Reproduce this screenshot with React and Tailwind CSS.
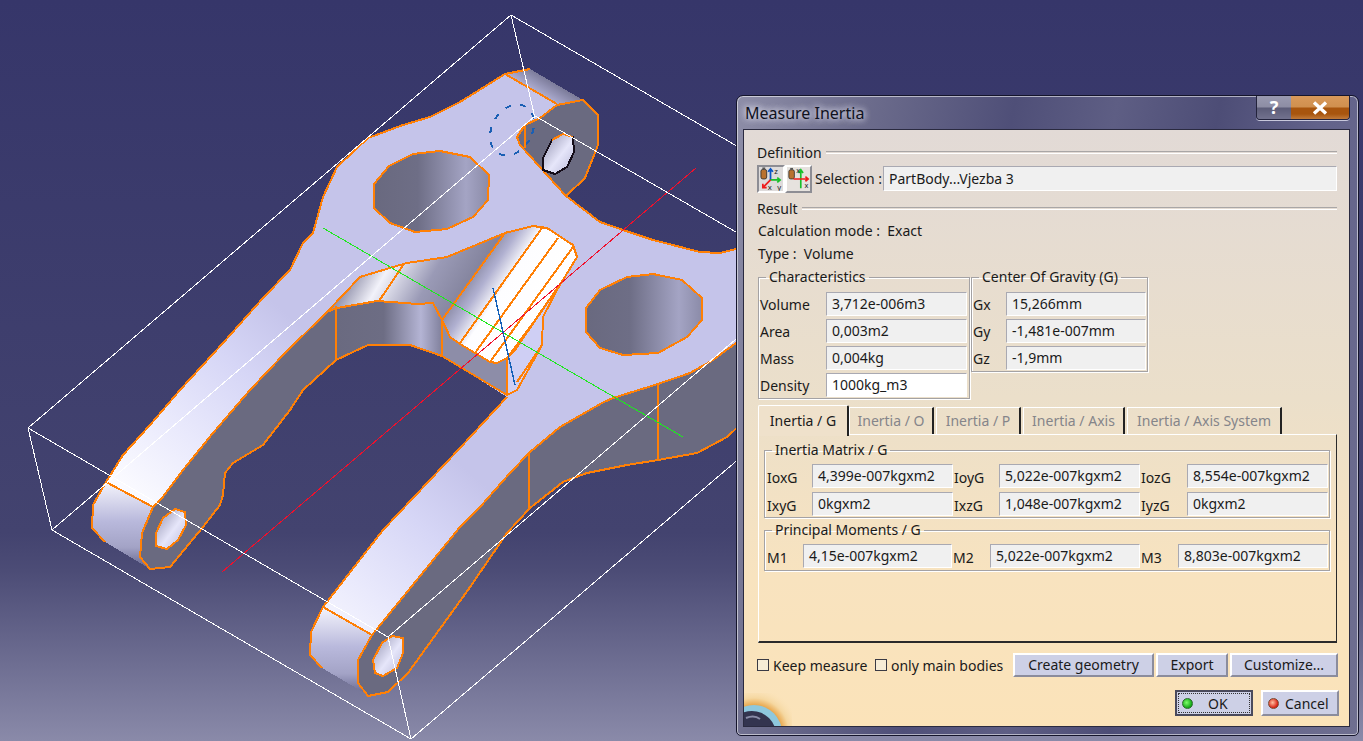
import React from "react";

const ORANGE = "#ff8006";

const face =
  "106,482 123,455 150,425 180,390 223,343 263,298 290,270 303,243 313,233 323,197 337,167 368,138 403,125 430,117 460,102 505,74 557,104 540,117 525,125 517,137 520,145 566,196 600,222 623,230 653,240 700,252 720,253 740,248 740,340 713,360 690,373 658,384 613,398 602,403 560,427 530,452 510,473 480,507 460,527 372,635 323,607 383,530 460,448 507,397 442,356 410,345 368,345 336,360 336,306 327,312 285,353 250,390 213,433 183,470 162,498 153,507";

const leftWall =
  "153,507 162,498 183,470 213,433 250,390 285,353 327,312 336,306 336,360 303,390 290,410 263,445 233,463 225,473 223,495 220,505 203,527 170,567 150,569 140,557 142,533";
const rightWall =
  "372,635 460,527 480,507 510,473 530,452 560,427 602,403 613,398 658,384 690,373 713,360 740,340 740,425 727,437 697,453 658,460 627,465 587,473 563,482 530,508 507,533 468,590 408,673 388,692 368,696 358,683 358,660";
const midWall = "336,306 377,301 418,304 433,303 442,320 442,356 410,345 368,345 336,360";
const fillet = "327,312 360,277 393,267 407,263 447,257 505,233 442,320 433,303 418,304 377,301 337,308";
const tube = "505,233 533,226 547,228 573,245 577,257 563,280 533,323 507,358 497,363 490,362 460,344 450,337 442,320";
const underTube = "442,356 442,320 450,337 460,344 475,353 490,362 497,363 507,358 507,395";
const rib = "507,358 515,350 533,323 563,280 557,290 543,317 542,345 517,390 507,395";

const holeA = "440,151 470,157 489,175 488,200 473,217 447,229 415,232 390,223 374,208 374,184 389,166 413,154";
const holeB = "627,277 653,274 682,280 702,298 702,320 687,337 658,353 623,355 600,348 586,332 586,308 600,290";
const lugFace = "583,100 598,115 598,145 585,178 566,196 520,145 517,137 525,125 540,118 557,105";
const lugTop = "505,74 530,69 583,100 557,105";
const lugHole = "563,134 573,137 574,152 567,167 555,174 543,170 543,158 552,140";
const capLeft = "106,482 153,507 142,533 140,557 150,569 147,567 105,542 92,528 93,505";
const capRight = "323,607 372,635 358,660 358,683 368,696 363,692 322,668 310,655 311,632";
const endHoleLeft = "175,509 185,512 186,525 178,540 167,549 156,546 156,533 163,518";
const endHoleRight = "392,636 403,638 403,653 397,668 383,676 375,673 373,660 382,643";

const boxLines = [
  [511, 15, 28, 428],
  [511, 15, 847, 210],
  [511, 15, 535, 118],
  [28, 428, 388, 637],
  [28, 428, 52, 530],
  [52, 530, 411, 739],
  [52, 530, 535, 116],
  [388, 637, 411, 739],
  [388, 637, 847, 244],
  [411, 739, 871, 346],
  [535, 116, 871, 310],
];

function Part() {
  return (
    <svg className="absolute inset-0" width="1363" height="741" viewBox="0 0 1363 741" shapeRendering="crispEdges">
      <defs>
        <linearGradient id="faceG" gradientUnits="userSpaceOnUse" x1="130" y1="495" x2="287" y2="314">
          <stop offset="0" stopColor="#fbfbff" />
          <stop offset="0.35" stopColor="#e9e9fc" />
          <stop offset="0.7" stopColor="#d6d6f6" />
          <stop offset="1" stopColor="#c5c4ea" />
        </linearGradient>
        <linearGradient id="holeG" x1="0" y1="0" x2="1" y2="0">
          <stop offset="0" stopColor="#69697f" />
          <stop offset="0.38" stopColor="#6e6e86" />
          <stop offset="0.8" stopColor="#a4a4c4" />
          <stop offset="1" stopColor="#8b8ba8" />
        </linearGradient>
        <linearGradient id="capG" x1="0" y1="0" x2="0" y2="1">
          <stop offset="0" stopColor="#f4f4fc" />
          <stop offset="0.45" stopColor="#b9b9dc" />
          <stop offset="0.75" stopColor="#a3a3c6" />
          <stop offset="1" stopColor="#62628a" />
        </linearGradient>
        <linearGradient id="tubeG" gradientUnits="userSpaceOnUse" x1="470" y1="260" x2="560" y2="320">
          <stop offset="0" stopColor="#77778f" />
          <stop offset="0.22" stopColor="#b0b0d0" />
          <stop offset="0.4" stopColor="#fdfdff" />
          <stop offset="0.82" stopColor="#ffffff" />
          <stop offset="1" stopColor="#d2d2f2" />
        </linearGradient>
        <linearGradient id="filletG" gradientUnits="userSpaceOnUse" x1="350" y1="265" x2="470" y2="335">
          <stop offset="0" stopColor="#7a7a98" />
          <stop offset="0.25" stopColor="#f2f2fa" />
          <stop offset="0.55" stopColor="#9a9ab6" />
          <stop offset="1" stopColor="#74748c" />
        </linearGradient>
        <linearGradient id="midG" x1="0" y1="0" x2="1" y2="0">
          <stop offset="0" stopColor="#6a6a80" />
          <stop offset="0.45" stopColor="#6d6d84" />
          <stop offset="0.8" stopColor="#b4b4d4" />
          <stop offset="1" stopColor="#80809c" />
        </linearGradient>
        <linearGradient id="lugG" gradientUnits="userSpaceOnUse" x1="535" y1="100" x2="552" y2="72">
          <stop offset="0" stopColor="#c5c4ea" />
          <stop offset="1" stopColor="#62627e" />
        </linearGradient>
        <linearGradient id="boreG" x1="0" y1="0" x2="1" y2="1">
          <stop offset="0" stopColor="#8e8eac" />
          <stop offset="0.55" stopColor="#e6e6fa" />
          <stop offset="1" stopColor="#b6b6d6" />
        </linearGradient>
      </defs>

      <polygon points={leftWall} fill="#6a6a80" stroke={ORANGE} strokeWidth="2" />
      <polygon points={rightWall} fill="#6a6a80" stroke={ORANGE} strokeWidth="2" />
      <polygon points={face} fill="url(#faceG)" />
      <polyline
        points="153,507 162,498 183,470 213,433 250,390 285,353 327,312"
        fill="none"
        stroke={ORANGE}
        strokeWidth="2"
      />
      <polyline
        points="106,482 123,455 150,425 180,390 223,343 263,298 290,270 303,243 313,233 323,197 337,167 368,138 403,125 430,117 460,102 505,74"
        fill="none"
        stroke={ORANGE}
        strokeWidth="2"
      />
      <polyline
        points="566,196 600,222 623,230 653,240 700,252 720,253 740,248"
        fill="none"
        stroke={ORANGE}
        strokeWidth="2"
      />
      <polyline points="372,635 460,527 480,507 510,473 530,452 560,427 602,403 613,398 658,384 690,373 713,360 740,340" fill="none" stroke={ORANGE} strokeWidth="2" />
      <polyline points="323,607 383,530 460,448 507,397" fill="none" stroke={ORANGE} strokeWidth="2" />

      {/* pocket */}
      <polygon points={underTube} fill="#8d8da8" stroke={ORANGE} strokeWidth="2" />
      <polygon points={midWall} fill="url(#midG)" stroke={ORANGE} strokeWidth="2" />
      <polygon points={fillet} fill="url(#filletG)" stroke={ORANGE} strokeWidth="2" />
      <polygon points={rib} fill="#cfcff4" stroke={ORANGE} strokeWidth="2" />
      <polygon points={tube} fill="url(#tubeG)" stroke={ORANGE} strokeWidth="2" />
      <line x1="336" y1="306" x2="336" y2="360" stroke={ORANGE} strokeWidth="2" />
      <line x1="404" y1="264" x2="379" y2="301" stroke={ORANGE} strokeWidth="2" />
      <line x1="542" y1="228" x2="460" y2="343" stroke={ORANGE} strokeWidth="2" />
      <line x1="558" y1="238" x2="475" y2="353" stroke={ORANGE} strokeWidth="2" />
      <line x1="573" y1="247" x2="490" y2="362" stroke={ORANGE} strokeWidth="2" />
      <line x1="563" y1="280" x2="515" y2="350" stroke={ORANGE} strokeWidth="2" />
      <line x1="507" y1="358" x2="507" y2="395" stroke={ORANGE} strokeWidth="2" />
      <line x1="542" y1="345" x2="517" y2="382" stroke={ORANGE} strokeWidth="2" />

      {/* holes and lug */}
      <polygon points={holeA} fill="url(#holeG)" stroke={ORANGE} strokeWidth="2" />
      <polygon points={holeB} fill="url(#holeG)" stroke={ORANGE} strokeWidth="2" />
      <polygon points={lugTop} fill="url(#lugG)" />
      <polyline points="505,74 530,69" fill="none" stroke={ORANGE} strokeWidth="2" />
      <line x1="505" y1="74" x2="557" y2="104" stroke={ORANGE} strokeWidth="2" />
      <polygon points={lugFace} fill="#6a6a80" stroke={ORANGE} strokeWidth="2" />
      <line x1="525" y1="125" x2="525" y2="148" stroke={ORANGE} strokeWidth="2" />
      <polygon points={lugHole} fill="url(#boreG)" stroke="#140c18" strokeWidth="2" />
      <polyline points="552,140 563,134 573,137" fill="none" stroke={ORANGE} strokeWidth="2" />
      <ellipse
        cx="512"
        cy="130"
        rx="20"
        ry="27"
        fill="none"
        stroke="#1a5fb4"
        strokeWidth="2"
        strokeDasharray="6 9"
        transform="rotate(30 512 130)"
      />

      {/* arm ends */}
      <polygon points={capLeft} fill="url(#capG)" />
      <polyline points="153,507 106,482 93,505 92,528 105,542" fill="none" stroke={ORANGE} strokeWidth="2" />
      <polyline points="153,507 142,533 140,557 150,569 170,567" fill="none" stroke={ORANGE} strokeWidth="2" />
      <polygon points={endHoleLeft} fill="url(#boreG)" stroke={ORANGE} strokeWidth="2" />
      <polygon points={capRight} fill="url(#capG)" />
      <polyline points="372,635 323,607 311,632 310,655 322,668" fill="none" stroke={ORANGE} strokeWidth="2" />
      <polyline points="372,635 358,660 358,683 368,696 388,692 408,673" fill="none" stroke={ORANGE} strokeWidth="2" />
      <polygon points={endHoleRight} fill="url(#boreG)" stroke={ORANGE} strokeWidth="2" />
      <line x1="529" y1="453" x2="529" y2="508" stroke={ORANGE} strokeWidth="2" />
      <line x1="658" y1="384" x2="658" y2="460" stroke={ORANGE} strokeWidth="2" />

      {/* axes and bounding box */}
      <line x1="222" y1="572" x2="696" y2="168" stroke="#f0102c" strokeWidth="1" />
      <line x1="323" y1="228" x2="683" y2="437" stroke="#1fe81f" strokeWidth="1" />
      <line x1="493" y1="288" x2="515" y2="385" stroke="#1560b8" strokeWidth="1.4" />
      {boxLines.map((l, i) => (
        <line key={i} x1={l[0]} y1={l[1]} x2={l[2]} y2={l[3]} stroke="#ffffff" strokeWidth="1" />
      ))}
    </svg>
  );
}

function InertiaIcon() {
  return (
    <svg width="25" height="25" viewBox="0 0 25 25">
      <rect x="2" y="3" width="6" height="10" rx="2" fill="#b9722f" stroke="#222" strokeWidth="0.8" />
      <rect x="3.5" y="1" width="3" height="2" fill="#555" />
      <path d="M12 14V3M9.5 5.5L12 2.5l2.5 3" fill="none" stroke="#0b56c6" strokeWidth="1.8" />
      <path d="M12 14h10M19 11.5l3 2.5-3 2.5" fill="none" stroke="#18c02a" strokeWidth="1.8" />
      <path d="M12 14l-8 8M4 18v4h4" fill="none" stroke="#ee1c1c" strokeWidth="1.8" />
      <text x="16" y="8" fontSize="8" fill="#222">z</text>
      <text x="9" y="24" fontSize="8" fill="#222">x</text>
      <text x="19" y="24" fontSize="8" fill="#222">y</text>
    </svg>
  );
}

function AxisIcon() {
  return (
    <svg width="25" height="25" viewBox="0 0 25 25">
      <rect x="2" y="3" width="6" height="10" rx="2" fill="#b9722f" stroke="#222" strokeWidth="0.8" />
      <rect x="3.5" y="1" width="3" height="2" fill="#555" />
      <path d="M15 23V4M12.5 6.5L15 3l2.5 3.5" fill="none" stroke="#18c02a" strokeWidth="1.8" />
      <path d="M7 13h16M20 10.5l3 2.5-3 2.5" fill="none" stroke="#ee1c1c" strokeWidth="1.8" />
      <text x="10" y="7" fontSize="8" fill="#222">x</text>
      <text x="19" y="23" fontSize="8" fill="#222">x</text>
    </svg>
  );
}

function Globe() {
  return (
    <svg className="absolute left-0 bottom-0" width="48" height="33" viewBox="0 0 48 33">
      <defs>
        <radialGradient id="glow" gradientUnits="userSpaceOnUse" cx="10" cy="40" r="46">
          <stop offset="0.6" stopColor="#e8a64c" />
          <stop offset="0.76" stopColor="#f5d7a0" />
          <stop offset="1" stopColor="#fbe3b9" stopOpacity="0" />
        </radialGradient>
      </defs>
      <rect width="48" height="33" fill="url(#glow)" />
      <circle cx="10" cy="40" r="28" fill="#8ec8de" />
      <circle cx="8" cy="42" r="24" fill="#33344f" />
      <path d="M2 25c5-2 10-2 14 1" fill="none" stroke="#8a8ca8" strokeWidth="2" />
    </svg>
  );
}

function Field({ children, white }) {
  return (
    <div
      className={`h-[24px] border border-t-[#a9a9b2] border-l-[#a9a9b2] border-r-white border-b-white pl-[5px] leading-[22px] whitespace-nowrap ${
        white ? "bg-white" : "bg-[#f0f0f0]"
      }`}
    >
      {children}
    </div>
  );
}

function Group({ title, className, children }) {
  return (
    <fieldset
      className={`border border-[#a4a2a4] shadow-[inset_1px_1px_0_#fff,1px_1px_0_#fff] ${className}`}
    >
      <legend className="ml-[6px] px-[3px] h-[18px] leading-[18px] whitespace-nowrap">{title}</legend>
      {children}
    </fieldset>
  );
}

function Heading({ children }) {
  return (
    <div className="flex items-center h-[20px] w-[580px] gap-[4px]">
      <span>{children}</span>
      <div className="flex-1 h-[3px] border-t border-t-[#a9a6a6] border-b border-b-white" />
    </div>
  );
}

function Button({ children, className }) {
  return (
    <button
      className={`h-[24px] bg-[#cdd0e6] border-2 border-t-white border-l-white border-r-[#8b8c9c] border-b-[#8b8c9c] leading-[18px] text-center text-[#1a1a1a] ${className}`}
    >
      {children}
    </button>
  );
}

function Check({ label, className }) {
  return (
    <label className={`flex items-center gap-[4px] whitespace-nowrap ${className}`}>
      <span className="w-[12px] h-[12px] bg-[#f6ecd6] border border-[#3a3a44]" />
      {label}
    </label>
  );
}

const characteristics = [
  ["Volume", "3,712e-006m3"],
  ["Area", "0,003m2"],
  ["Mass", "0,004kg"],
  ["Density", "1000kg_m3", true],
];
const gravity = [
  ["Gx", "15,266mm"],
  ["Gy", "-1,481e-007mm"],
  ["Gz", "-1,9mm"],
];
const matrix = [
  ["IoxG", "4,399e-007kgxm2"],
  ["IoyG", "5,022e-007kgxm2"],
  ["IozG", "8,554e-007kgxm2"],
  ["IxyG", "0kgxm2"],
  ["IxzG", "1,048e-007kgxm2"],
  ["IyzG", "0kgxm2"],
];
const moments = [
  ["M1", "4,15e-007kgxm2"],
  ["M2", "5,022e-007kgxm2"],
  ["M3", "8,803e-007kgxm2"],
];
const tabs = [
  ["Inertia / O", "w-[85px]"],
  ["Inertia / P", "w-[85px]"],
  ["Inertia / Axis", "w-[102px]"],
  ["Inertia / Axis System", "w-[155px]"],
];

function Dialog() {
  return (
    <div className="absolute left-[736px] top-[95px] w-[623px] h-[641px] rounded-t-[7px] rounded-b-[5px] border border-[#15152c] shadow-[inset_0_0_0_1px_rgba(255,255,255,0.55)] bg-[linear-gradient(100deg,#8e8ea8_0%,#6c6c8c_18%,#4f4f78_38%,#5e5e84_52%,#4d4d76_66%,#62628a_80%,#6f6f90_100%)] flex flex-col items-start pl-[6px]">
      <div className="w-[607px] h-[33px] flex justify-between items-start">
        <span className="ml-[2px] mt-[8px] leading-[18px] text-[#10121e] [text-shadow:0_0_7px_#e6e6f2,0_0_7px_#e6e6f2]">
          Measure Inertia
        </span>
        <div className="flex h-[24px] border border-t-0 border-[#23233c] rounded-b-[4px] overflow-hidden shadow-[0_1px_0_#c8c8dc]">
          <div className="w-[34px] flex items-center justify-center bg-[linear-gradient(180deg,#9a9ab0_0%,#8d8da4_48%,#5c5c78_52%,#72728e_100%)] text-white font-bold text-[18px]">
            ?
          </div>
          <div className="w-[58px] flex items-center justify-center bg-[linear-gradient(180deg,#d9995a_0%,#d0904f_48%,#a8550e_52%,#a8550e_78%,#c07a3a_100%)]">
            <svg width="18" height="14" viewBox="0 0 18 14">
              <path d="M3 1.5l12 11M15 1.5l-12 11" stroke="#fff" strokeWidth="3.4" />
            </svg>
          </div>
        </div>
      </div>

      <div className="relative w-[607px] h-[598px] border border-[#2a2a40] bg-[linear-gradient(180deg,#e2dad6_0%,#ebdfca_45%,#f8e3bf_75%,#fbe3b9_100%)] pl-[13px] pt-[12px] pr-[10px] text-[14px] text-[#1a1a1a] overflow-hidden">
        <Heading>Definition</Heading>
        <div className="flex items-center mt-[3px] h-[27px]">
          <div className="w-[28px] h-[28px] flex items-center justify-center bg-[#dedbdb] border-2 border-t-[#8d8d94] border-l-[#8d8d94] border-r-white border-b-white">
            <InertiaIcon />
          </div>
          <div className="w-[27px] h-[28px] flex items-center justify-center bg-[#e6e2de] border-2 border-t-white border-l-white border-r-[#8d8d94] border-b-[#8d8d94]">
            <AxisIcon />
          </div>
          <span className="ml-[3px] w-[68px] whitespace-nowrap">Selection :</span>
          <div className="w-[454px] h-[25px] bg-[#f0f0f0] border border-t-[#a9a9b2] border-l-[#a9a9b2] border-r-white border-b-white pl-[5px] leading-[23px]">
            PartBody...Vjezba 3
          </div>
        </div>
        <div className="mt-[6px]">
          <Heading>Result</Heading>
        </div>
        <div className="mt-[3px] h-[20px] leading-[20px] ml-[1px]">Calculation mode :&nbsp; Exact</div>
        <div className="mt-[3px] h-[20px] leading-[20px] ml-[1px]">Type :&nbsp; Volume</div>

        <div className="flex items-start mt-[4px] ml-[1px] gap-[1px]">
          <Group title="Characteristics" className="w-[212px] pl-[1px] pt-[6px] pb-[1px]">
            <div className="flex flex-col gap-[3px]">
              {characteristics.map(([label, value, white]) => (
                <div key={label} className="flex items-center">
                  <span className="w-[66px]">{label}</span>
                  <div className="w-[141px]">
                    <Field white={white}>{value}</Field>
                  </div>
                </div>
              ))}
            </div>
          </Group>
          <Group title="Center Of Gravity (G)" className="w-[177px] pl-[1px] pt-[6px] pb-[1px]">
            <div className="flex flex-col gap-[3px]">
              {gravity.map(([label, value]) => (
                <div key={label} className="flex items-center">
                  <span className="w-[33px]">{label}</span>
                  <div className="w-[140px]">
                    <Field>{value}</Field>
                  </div>
                </div>
              ))}
            </div>
          </Group>
        </div>

        <div className="mt-[6px] ml-[1px] w-[579px]">
          <div className="flex items-end h-[29px]">
            <div className="relative z-10 w-[91px] h-[31px] -mb-[2px] bg-[#efe1cb] border-t border-l border-t-white border-l-white border-r-2 border-r-[#222] rounded-t-[2px] text-center leading-[30px]">
              Inertia / G
            </div>
            {tabs.map(([label, width]) => (
              <div
                key={label}
                className={`h-[27px] mr-[2px] border-t border-l border-t-white border-l-white border-r-2 border-r-[#222] text-center leading-[26px] text-[#85858a] ${width}`}
              >
                {label}
              </div>
            ))}
          </div>
          <div className="h-[209px] border border-t-white border-l-white border-r-[#2a2a2a] border-b-2 border-b-[#2a2a2a] pl-[5px] pt-[6px]">
            <Group title="Inertia Matrix / G" className="w-[566px] pl-[1px] pt-[5px] pb-[1px]">
              <div className="grid grid-cols-[46px_141px_46px_141px_47px_141px] gap-y-[4px] items-center">
                {matrix.map(([label, value]) => (
                  <React.Fragment key={label}>
                    <span className="pl-[1px] mt-[2px]">{label}</span>
                    <Field>{value}</Field>
                  </React.Fragment>
                ))}
              </div>
            </Group>
            <Group title="Principal Moments / G" className="w-[566px] mt-[3px] pl-[1px] pt-[5px] pb-[2px]">
              <div className="grid grid-cols-[37px_149px_38px_150px_38px_150px] items-center">
                {moments.map(([label, value]) => (
                  <React.Fragment key={label}>
                    <span className="pl-[1px] mt-[2px]">{label}</span>
                    <Field>{value}</Field>
                  </React.Fragment>
                ))}
              </div>
            </Group>
          </div>
        </div>

        <div className="flex items-center mt-[10px]">
          <Check label="Keep measure" className="w-[118px]" />
          <Check label="only main bodies" className="w-[138px]" />
          <Button className="w-[141px]">Create geometry</Button>
          <Button className="w-[72px] ml-[2px]">Export</Button>
          <Button className="w-[108px] ml-[2px]">Customize...</Button>
        </div>

        <div className="flex justify-end items-center mt-[13px] w-[582px] gap-[8px]">
          <button className="relative w-[78px] h-[26px] bg-[#cdd0e6] border-2 border-[#4a4a5c] flex items-center outline-1 outline-dotted -outline-offset-4 outline-[#333]">
            <span className="ml-[5px] w-[11px] h-[11px] rounded-full bg-[radial-gradient(circle_at_40%_40%,#7dff6a,#12a516_70%)] border border-[#2b6a2b]" />
            <span className="ml-[15px]">OK</span>
          </button>
          <button className="w-[78px] h-[26px] bg-[#cdd0e6] border-2 border-t-white border-l-white border-r-[#8b8c9c] border-b-[#8b8c9c] flex items-center">
            <span className="ml-[5px] w-[11px] h-[11px] rounded-full bg-[radial-gradient(circle_at_40%_40%,#ffc2a2,#d81e10_70%)] border border-[#7a4a30]" />
            <span className="ml-[6px]">Cancel</span>
          </button>
        </div>
        <Globe />
      </div>
    </div>
  );
}

export default function App() {
  return (
    <div className="relative w-[1363px] h-[741px] overflow-hidden bg-[linear-gradient(180deg,#36366a_0%,#43436f_72%,#4c4c76_77%,#8a8aa9_100%)] font-['Noto_Sans','Liberation_Sans',sans-serif]">
      <Part />
      <Dialog />
    </div>
  );
}
